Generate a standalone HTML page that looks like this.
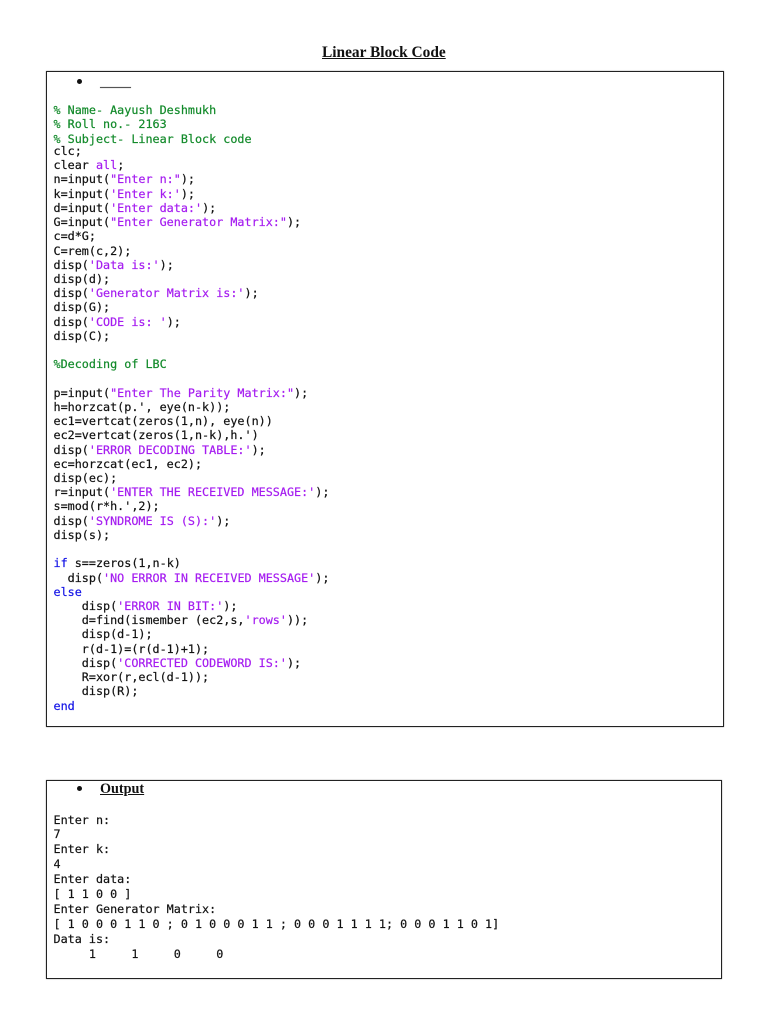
<!DOCTYPE html>
<html>
<head>
<meta charset="utf-8">
<style>
html,body{margin:0;padding:0;background:#fff;width:768px;height:1024px;overflow:hidden}
.a{position:absolute}
.box{position:absolute;border:1px solid #222;box-sizing:border-box;box-shadow:0 0 1px #777}
pre{position:absolute;margin:0;left:53.5px;font-family:"DejaVu Sans Mono","Liberation Mono",monospace;font-size:11.75px;color:#111;-webkit-text-stroke:0.2px;filter:blur(0.25px)}
i{font-style:normal}
.g{color:#128a2a}
.p{color:#a51cf0}
.b{color:#1414e6}
.h{font-family:"Liberation Serif",serif;font-weight:bold;text-decoration:underline;color:#111;line-height:17px;white-space:nowrap}
.d{position:absolute;width:5px;height:5px;border-radius:50%;background:#111}
</style>
</head>
<body>
<div class="a h" style="left:322px;top:44px;font-size:15.4px">Linear Block Code</div>

<div class="box" style="left:46px;top:71px;width:678px;height:656px"></div>
<div class="d" style="left:77px;top:79px"></div>
<div class="a" style="left:100px;top:87px;width:31px;height:1px;background:#555;box-shadow:0 0 1px #999"></div>

<pre class="g" style="top:103px;line-height:14.4px">% Name- Aayush Deshmukh
% Roll no.- 2163
% Subject- Linear Block code</pre>

<pre style="top:144px;line-height:14.22px">clc;
clear <i class="p">all</i>;
n=input(<i class="p">"Enter n:"</i>);
k=input(<i class="p">'Enter k:'</i>);
d=input(<i class="p">'Enter data:'</i>);
G=input(<i class="p">"Enter Generator Matrix:"</i>);
c=d*G;
C=rem(c,2);
disp(<i class="p">'Data is:'</i>);
disp(d);
disp(<i class="p">'Generator Matrix is:'</i>);
disp(G);
disp(<i class="p">'CODE is: '</i>);
disp(C);

<i class="g">%Decoding of LBC</i>

p=input(<i class="p">"Enter The Parity Matrix:"</i>);
h=horzcat(p.', eye(n-k));
ec1=vertcat(zeros(1,n), eye(n))
ec2=vertcat(zeros(1,n-k),h.')
disp(<i class="p">'ERROR DECODING TABLE:'</i>);
ec=horzcat(ec1, ec2);
disp(ec);
r=input(<i class="p">'ENTER THE RECEIVED MESSAGE:'</i>);
s=mod(r*h.',2);
disp(<i class="p">'SYNDROME IS (S):'</i>);
disp(s);

<i class="b">if</i> s==zeros(1,n-k)
  disp(<i class="p">'NO ERROR IN RECEIVED MESSAGE'</i>);
<i class="b">else</i>
    disp(<i class="p">'ERROR IN BIT:'</i>);
    d=find(ismember (ec2,s,<i class="p">'rows'</i>));
    disp(d-1);
    r(d-1)=(r(d-1)+1);
    disp(<i class="p">'CORRECTED CODEWORD IS:'</i>);
    R=xor(r,ecl(d-1));
    disp(R);
<i class="b">end</i></pre>

<div class="box" style="left:46px;top:780px;width:676px;height:199px"></div>
<div class="d" style="left:77px;top:786px"></div>
<div class="a h" style="left:100px;top:781px;font-size:14.2px">Output</div>

<pre style="top:812.5px;line-height:14.96px">Enter n:
7
Enter k:
4
Enter data:
[ 1 1 0 0 ]
Enter Generator Matrix:
[ 1 0 0 0 1 1 0 ; 0 1 0 0 0 1 1 ; 0 0 0 1 1 1 1; 0 0 0 1 1 0 1]
Data is:
     1     1     0     0</pre>
</body>
</html>
